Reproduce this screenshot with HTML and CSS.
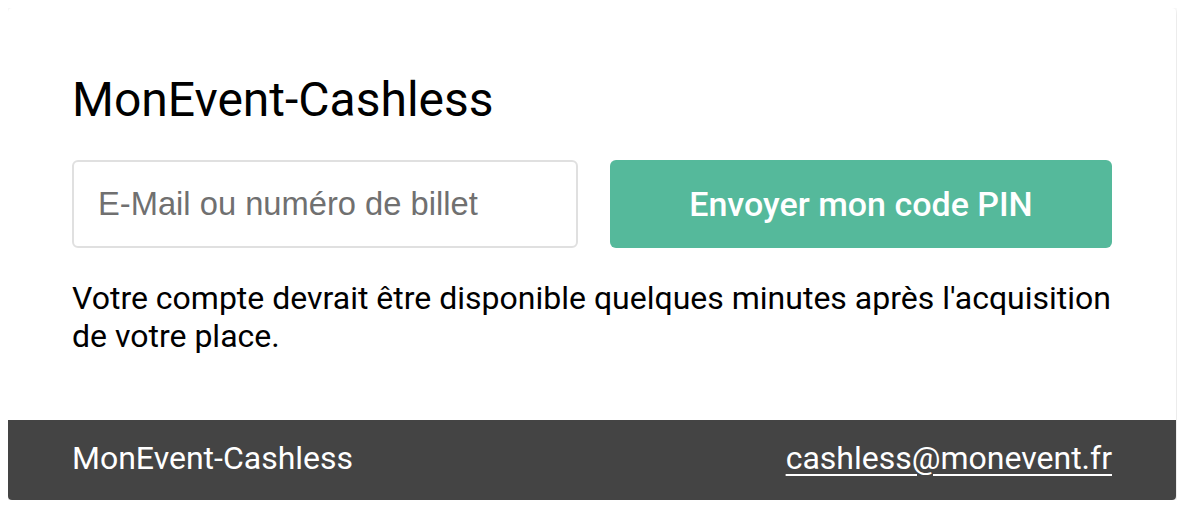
FILE: index.html
```html
<!DOCTYPE html>
<html lang="fr">
<head>
<meta charset="utf-8">
<title>MonEvent-Cashless</title>
<link rel="stylesheet" href="styles.css">
</head>
<body>
<div class="card">
  <main class="content">
    <h1 class="title">MonEvent-Cashless</h1>
    <form class="row">
      <input class="field" type="text" placeholder="E-Mail ou numéro de billet">
      <button class="btn" type="button">Envoyer mon code PIN</button>
    </form>
    <p class="note">Votre compte devrait être disponible quelques minutes après l'acquisition de votre place.</p>
  </main>
  <footer class="footer">
    <span class="brand">MonEvent-Cashless</span>
    <a class="mail" href="#">cashless@monevent.fr</a>
  </footer>
</div>
</body>
</html>
```

FILE: styles.css
```css
* { box-sizing: border-box; }
body {
  margin: 8px;
  background: #fff;
  font-family: Roboto, "Liberation Sans", sans-serif;
  color: #000;
}
.card {
  width: 1168px;
  border-radius: 4px;
  background: #fff;
  box-shadow: 0 1px 5px rgba(0,0,0,0.18);
  overflow: hidden;
}
.content {
  padding: 64px 64px 65px;
}
.title {
  margin: 0;
  font-size: 48px;
  font-weight: 400;
  line-height: 56px;
}
.row {
  display: flex;
  gap: 32px;
  margin: 32px 0 0;
}
.field {
  width: 506px;
  height: 88px;
  border: 2px solid #e0e0e0;
  border-radius: 6px;
  padding: 0 24px;
  font-family: "Liberation Sans", Arial, sans-serif;
  font-size: 32.7px;
  color: #333;
  outline: none;
}
.field::placeholder { color: #707070; }
.btn {
  flex: 1;
  height: 88px;
  border: none;
  border-radius: 6px;
  background: #55b99b;
  color: #fff;
  font-family: Roboto, sans-serif;
  font-weight: 500;
  font-size: 34px;
}
.note {
  margin: 31px 0 0;
  font-size: 32px;
  line-height: 38px;
}
.footer {
  height: 80px;
  background: #444;
  color: #fff;
  display: flex;
  align-items: center;
  justify-content: space-between;
  padding: 0 64px 4px;
  font-size: 32px;
}
.mail {
  color: #fff;
  text-decoration: underline;
  text-decoration-thickness: 2px;
  text-underline-offset: 5px;
}
```
